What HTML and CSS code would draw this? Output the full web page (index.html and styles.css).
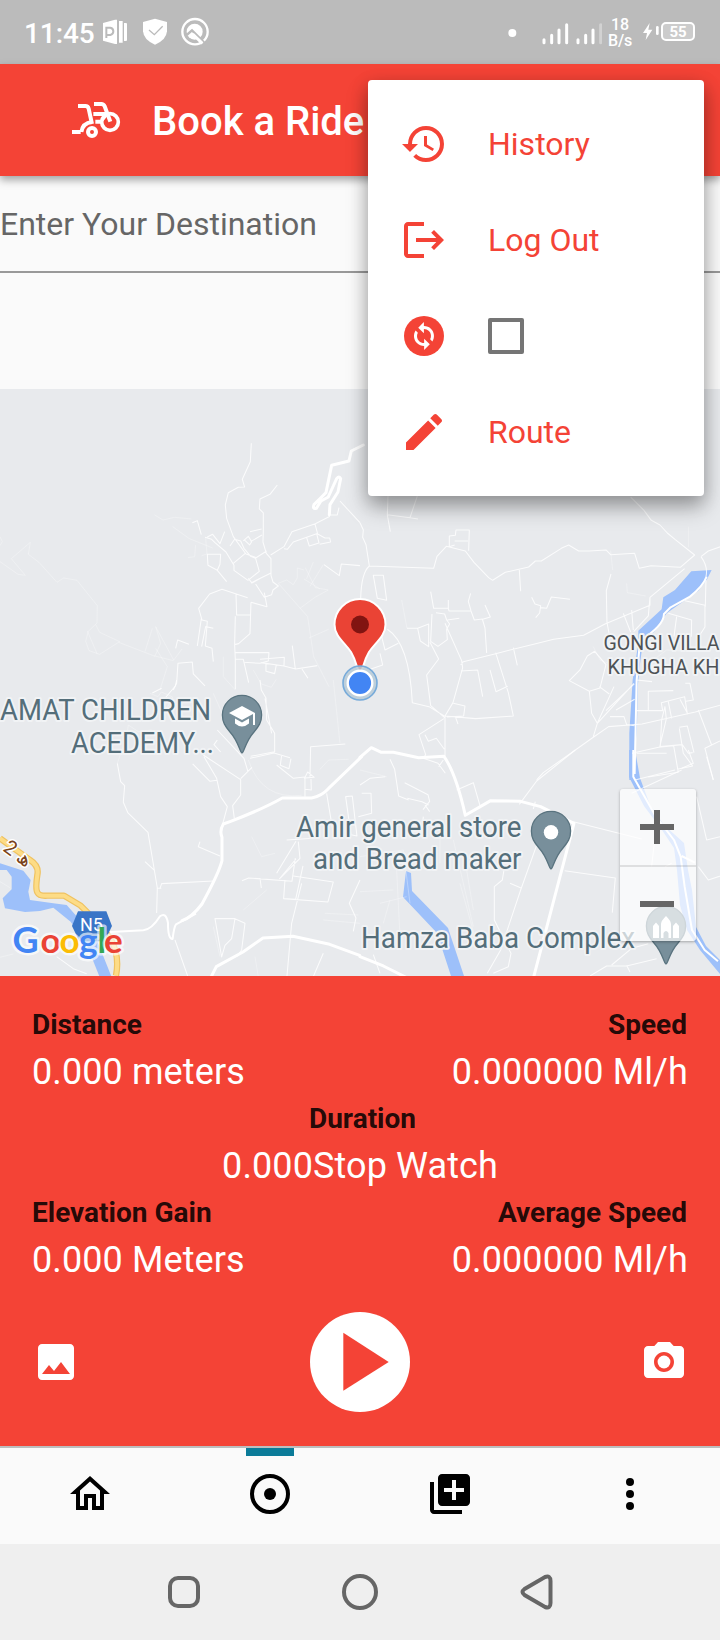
FILE: index.html
```html
<!DOCTYPE html>
<html lang="en">
<head>
<meta charset="utf-8">
<title>Book a Ride</title>
<link rel="stylesheet" href="styles.css">
</head>
<body>
<div class="screen">
  <header class="status">
    <div class="status-left">
      <span class="clock">11:45</span>
      <svg class="status-icons" width="108" height="30" viewBox="306 48 324 90">
        <path fill="#fff" d="M309 69l36-10h6v73h-6l-36-10zM357 63h11v65h-11zM372 69h6q3 0 3 3v48q0 3-3 3h-6z"/>
        <path fill="none" stroke="#bbb" stroke-width="6" d="M319 80v34M319 83h12q9 2 9 11t-9 11h-12"/>
        <path fill="#fff" d="M465 56l36 10v28q-2 26-36 40q-34-14-36-40V66z"/>
        <path fill="none" stroke="#bbb" stroke-width="4" d="M447 90l16 14 25-25"/>
        <circle cx="585" cy="95" r="38" fill="none" stroke="#fff" stroke-width="7"/>
        <circle cx="584" cy="95" r="24" fill="#fff"/>
        <path fill="none" stroke="#bbb" stroke-width="7" d="M560 105l16-14 38 38"/>
        <path fill="none" stroke="#fff" stroke-width="9" d="M578 102l29 28"/>
      </svg>
    </div>
    <div class="status-right">
      <svg width="94" height="30" viewBox="443 48 282 90">
        <circle cx="456" cy="96" r="12" fill="#fff"/>
        <g stroke="#fff" stroke-width="9" stroke-linecap="round"><path d="M551 116v9M574 103v22M596 87v38M619 71v54M653 116v9M676 103v22M698 87v38"/><path stroke="#d2d2d2" d="M721 71v54"/></g>
      </svg>
      <span class="rate"><span>18</span><span>B/s</span></span>
      <svg class="bolt" width="18" height="18" viewBox="846 72 54 54"><path fill="#fff" d="M869 72l-20 30h12l-4 21 20-31h-12z"/><rect x="888" y="81" width="8" height="27" rx="4" fill="#fff"/></svg>
      <span class="battery">55</span>
    </div>
  </header>

  <div class="appbar">
    <svg class="brand" width="52" height="40" viewBox="210 300 156 120" fill="none" stroke="#fff" stroke-width="12">
      <path d="M234 318h22q8 0 10 8l10 46M216 396h26M244 396q4-27 32-30M282 312h22q7 0 10 7l17 46M280 342h50M286 365h18"/>
      <circle cx="276" cy="396" r="12"/><circle cx="330" cy="366" r="25" stroke-width="11"/>
      <path d="M304 365l18-22" stroke-width="7"/>
    </svg>
    <h1 class="title">Book a Ride</h1>
  </div>

  <div class="search"><span class="hint">Enter Your Destination</span></div>

  <main class="map">
    <svg class="map-canvas" width="720" height="587" viewBox="0 389 720 587">
      <g fill="#9dc0fa">
        <path transform="translate(360 480) scale(.3333)" d="M994 274l61-4-15 30-25 32-95 68-35 52-37 40-8 60-7 70-2 118-8 100 15 60h-30V760l10-160 17-110V452l70-64 5-36 35-22z"/>
        <path d="M629 750v27l15 29 18 24 12 18 3 22 3 35 7 25 13 20 20 24v-14l-14-14-10-19-4-37-4-20-4-27-20-18-14-20-10-27-5-28z"/>
        <path d="M406 871l5 2 1 18 36 37 16 48h-13l-14-43-34-36z"/>
        <path transform="translate(0 680) scale(.3333)" d="M0 550l70 22 22 28-7 35 5 25 70 10 40 5 30 34 60 70 20 50 24 60h-36l-36-90-50-74-52-42-40 10-45 3-60-11-7-30 27-27v-38l-15-20H0z"/>
      </g>
      <!-- north-west -->
      <g transform="translate(0 390) scale(.3333)" class="roads">
        <path class="trace" d="M0 440l7 15-7 12M0 515l54 38 22 3-42-50 57-49-6 36 32 24 54 60 20-13 40 7 61 76-1 52-26 25-8 30 10 28 32 11 60-38-60-28-12-23M262 723l30 70M356 757l104 40 60 15 26-35M464 800l18-40-15-50 54 100M435 785l22-70M480 900l22-70-35-55M464 375l25 15 35-8 50 5M518 410l50 36 70 28M587 465l-3 35-20 3M617 445l4 47-16 5M835 580l25-10 20 14 12-20 0-30 20 6M900 655l45-33 40-22-39-7-30-60M912 567l48 30M970 524l-40 65M940 516l-20 50M927 744l59-26M835 580l88 100 18 120 46 90M670 800v60l36 40M760 840l24 42 30 10 15-24"/>
        <path class="minor" d="M754 160l-3 55-24 53 7 23-19 1-30 16-9 37 4 40 20 55 38 52 28 10 12 42-34 27-42-30 0-15-24-40-33-28-10-10-20-6M832 285l-22 28-30 14-2 30 12 12 0 55-1 32 10 34 14 16 0 50 6 20 16 12-16 12-4 14-22 8-26-40M690 468l14-20 18 5 10 22 20 24 14 6 34-22M733 450l16 15 6-10-10-16-15 14M750 425l35-8M752 455l34-20M622 493h40l-2 30-8 18-28-15zM652 541l28 34M577 398l15-6 12 42M622 441l16-8 22 28 14-36M812 495l40-25 24-45 70-24 44-22M852 476l10 2 18-22 70-25 7 28-29 9-8-25M945 402l8 30 22 12 14 0 3 12-33 7M990 375h22l5-22M1020 333l60 65M1080 527l-56-5-6 35-46-33M700 520l36-30M745 565l10 13 58-29M743 623l-77-25-37 14-33 43 10 35 16 4-6 74 20 7 4 40M708 610l2 65 42 0M753 637l48 13-8-42M753 637l-3 94-34 30-12 3 2-85M592 768l12-82M527 775l6-25 34 13M605 770l12-60 23 5M520 900l10-20 4-60 43-4 3 36 35 36M704 765l2 43 24 0 16 70M704 788h103l-2 25-25 7-50-3M780 808l73-6-1 26-70-10M798 820v24l26 7 5-26-30-5M852 828l35 9 65-10M877 767l9 70M906 837l18 28M706 808v90M754 580l26-14"/>
        <path class="main" d="M1090 165l-36 18-7 30-52 13-17 82-16 16-20 20q-5 14 7 11l14-22 22-12 25-55q8-10 12 0l-8 40-24 38-2 30"/>
      </g>
      <!-- north-east -->
      <g transform="translate(360 480) scale(.3333)" class="roads">
        <path class="minor" d="M84 48l-2 57 9 50M172 48l-22 65-68-9M150 113l24 4M0 128l10 22-2 22 10 22 10 64 193 7 10-36 28-30 57 14 26 34 44 46 12 8 38-24 70-16 20-18h18l60-38 22-10 30 18 32 0 50-3 14 14 72-4 14 45 35-8 88 5 43-37-58-46-24-20-22-24-26-14-22-30-40-40M1023 230l22-17 37-13M1023 230q22 30 15 60M28 258q-24 20-26 98M40 286h30l10 75-28-6zM284 195l-16 5v-32l18-2 2-16h40l-2 62M284 183h40M478 270l4 64M212 335l9 50h44l2 8h66l10 27 24-3 8 27 5 75M265 360v24M332 340l-7 24 8 28M375 375l16 36-23 7M216 402l-4 82 22 15 28-20-2-32 9-15-9-12-6-18-26-4M262 420l36-5M255 430l50 112 3 22-29 104-24 40 92 8 113-8-15-70-38-120M206 500v-68l-33 13 8 38zM141 445h34M210 487l26 50-36 48 12 92 42 36M302 555l8-10 97-24 108-27 66-16 90-12 64-34 135-56v-24l104-86M460 503l12 53M303 573l50-3 15 80M390 570l18 65 35-16M515 352l10 20 17 5-3 22-12 14M542 383l18 2 14-34 56 7M753 282l-14 50 2 95 6 32M790 400l22 56M870 352l-5 56-44 47M815 390l5 60M82 448q66 42 75 220l50 12 46 28M0 450q40 10 60 0l15 60 40-20M60 520l8 35-44 15M280 670l35 8-4 30-50 3M286 710l8 22M255 708v120M252 716l-75 48 20 60-6 10M195 764l10 20 24-9 24 33M190 835l44 15 22 30M250 840l-14 20M530 900l20-22 150-106 46-32 100-8 160-36 80-22M628 602l32-32 22-42 22-14 34 40-18 70-32 10zM688 634l7 66 17 30 50-110M700 770l12-40 110-120M738 692l85-80M718 620l30 22M768 690l56-32M750 710h42l8 24 24 3M830 600l46 5M865 690v-56l75-2M825 692h83l-4-24 70-18 8 50M925 665l10 50M960 658l24 45M976 610h14l10 50-22 4M905 720l-4 80 66-6 18 26 13-2M905 720l10-40 4 37-20 85M816 820l80-18 45-5 14 80-90 14M958 742l24-4 20 80M958 745l12 75 28 38-46 10M1015 690l40 105-20 10 25 95M1055 795l25-12M925 400l70 20-1 50M950 410l-8 60M975 362l60 14v65l-14 22M1038 300l-2 80"/>
        <path class="trace" d="M125 360l16 85M758 270l-6-58M986 140v62M800 310l2 28 55 10M700 500l20 40 50 20M880 540l40-30 80 5"/>
        <path class="mid" d="M1040 290q-10 28-50 60l-58 32-20 20q0 35-72 80l-10 120-6 280"/>
      </g>
      <!-- south-west -->
      <g transform="translate(0 680) scale(.3333)" class="roads">
        <path class="trace" d="M450 40l24 10 10-14 34 15-30 60M455 150l-40 5-30-20-5 35-28 80M640 40l40 90 38 24M745 240q40 120 160 106M960 268l26-28 60-2M1000 0l20 190M755 470l30 60 40-10M800 630l-70 60M640 740l20 90M765 830l10 60M0 832l40-10M0 605l30 18M975 700l100 5M970 720l110 10"/>
        <path class="minor" d="M485 25l-28 14M530 0l-4 18-38 45M352 250l10 55 12 12-4 50 14 32 60 58 18 107 10 60-2 75M480 625l5-14 156-8M435 545l30 28M600 485l-5 15 65 28M470 625h14M578 252l52 52 20-3M612 230l38 65 12 55 20 30-16 60M610 225l112 74 0 46-24 32 5 38M722 296l34-34M652 150l80 85 12 40M652 180l-10 14 20 22M780 0l4 30 14 24 2 66 24 40v55l-72 14M750 235l72-16 48 14M845 226l-4 30 26 10 6-30M915 350v-56l28-2-20-16-10 20M830 255l50 40 34-4M933 297l1 33-18-2M930 290l2-90 104-8M980 340l20 120M1037 350l20-2 14 120-18-4zM895 485l5 50-60 60M860 480l80-5M726 602l20-8 130 10 10-70M780 594l4 30M830 580l58-96M838 597l50-60M855 600l-4 56 36 2 22-100M850 656l134 10 16-60-120-18M905 610l-30 120-14 158M1080 600l-32 70 20 44-8 40M645 716h60l-10 60-20 20-10 35zM705 716l30 14-10 80-15 20M970 820l-30 70M525 780l38 108M170 830l50 36 40 15M815 160l-20-105"/>
        <path class="mid" d="M320 757l110-6q25-2 50-42 18-14 24 20 0 50 14 48 4-36 10-44l60-32"/>
        <path class="main" d="M1085 230l-100 96q-20 22-50 28h-88q-60 34-155 70l-22 8q-12 20-4 40v70q-8 35-60 130-30 40-60 50M635 888l14-28 80-44 60-42 90-5 110 24 90 33"/>
        <path stroke="#efc260" stroke-width="19" d="M0 475l90 65q28 18 22 45-6 42 0 52 6 12 30 10h50l50 30 60 60 30 40q28 50 16 110"/>
        <path stroke="#fddc86" stroke-width="12" d="M0 475l90 65q28 18 22 45-6 42 0 52 6 12 30 10h50l50 30 60 60 30 40q28 50 16 110"/>
        <path fill="#3975c7" stroke="none" d="M216 738l18-44h85l17 44-22 46h-76z"/>
      </g>
      <!-- south-east -->
      <g transform="translate(360 750) scale(.3333)" class="roads">
        <path class="trace" d="M0 320l130-20 20 160M60 460l80-20M300 400l50 180M0 60l80 20M320 360l20 120M0 425l100-5M110 360l10 200M240 260v80M70 520l20-70M280 270l60 260"/>
        <path class="minor" d="M90 28l14 30 12 80 30 12M0 105l30-20 46-5M134 98l70 36 5 20-20 25M206 165l-20-10-44-10M195 165l14 20M190 200l-6 60M290 120l50-22 22 76M478 163l52-70 116-93M526 155l-6 22M640 215l205 52M614 362l152 22-9 104M532 280l-50 140-60 180-40 70M450 400l35 15M400 670l45-20 8-40-50-100 0-100 24-20 5-30M755 645l60-50 50-14M690 678l50-30 60 0 90-22M800 646l10 20M60 670l-20-56M1010 140l30 130 40-10M1015 350l30 40 60-20M815 130l150-70M875 350l10-90M985 0l15 40-35 15M1040 20l20 70M825 90l120-30M915 350l20-10M830 10h90M5 130l28 0 2 60-40 10"/>
        <path class="mid" d="M820 0v80l68 120 54 70 20 50 12 90 22 130 38 60 40 34M965 318l40 20"/>
        <path class="main" d="M0 22l34-29 30 14 36 0 76 16 76-4q36 52 64 177l76-44 90 2 60 16 100 50-122 465M0 620l70 28 70 35"/>
      </g>

      <g class="place" font-size="29">
        <text x="0" y="720.2" textLength="211" lengthAdjust="spacingAndGlyphs">AMAT CHILDREN</text>
        <text x="71" y="753" textLength="143" lengthAdjust="spacingAndGlyphs">ACEDEMY...</text>
        <text x="296" y="836.7" textLength="225.500" lengthAdjust="spacingAndGlyphs">Amir general store</text>
        <text x="313" y="869.4" textLength="208.500" lengthAdjust="spacingAndGlyphs">and Bread maker</text>
        <text x="361" y="948.3" textLength="274" lengthAdjust="spacingAndGlyphs">Hamza Baba Complex</text>
      </g>
      <g class="place area" font-size="21">
        <text x="603.5" y="650" textLength="116" lengthAdjust="spacingAndGlyphs">GONGI VILLA</text>
        <text x="607.5" y="674" textLength="112" lengthAdjust="spacingAndGlyphs">KHUGHA KH</text>
      </g>
      <text class="shield" x="80" y="930.5">N5</text>
      <text class="road-name" transform="translate(2 850) rotate(36)">2 ھ</text>

      <g fill="#788f9b" stroke="#59737f" stroke-width="1.3">
        <path d="M242 753c-2 0-3-11-12-21-5-6-7.600-10-7.600-17a19.600 19.600 0 0 1 39.200 0c0 7-2.600 11-7.600 17-9 10-10 21-12 21z"/>
        <path d="M551 869c-2 0-3-11-12-21-5-6-7.600-10-7.600-17a19.600 19.600 0 0 1 39.200 0c0 7-2.600 11-7.600 17-9 10-10 21-12 21z"/>
        <path d="M666 964c-2 0-3-11-12-21-5-6-7.600-10-7.600-17a19.600 19.600 0 0 1 39.200 0c0 7-2.600 11-7.600 17-9 10-10 21-12 21z"/>
      </g>
      <g fill="#fff">
        <path d="M242 706l13 7v12h-2v-11l-11 6-13-7zM235 718.500l7 4 7-4v5q-7 6-14 0z"/>
        <circle cx="551" cy="832.300" r="7.200"/>
        <path d="M653 938v-12l3-3.500 3 3.500v12zM661 938v-14q0-3 5-8 5 5 5 8v14h-2.500v-5q-2.500-4-5 0v5zM673 938v-12l3-3.500 3 3.500v12z"/>
      </g>

      <text class="logo" y="953"><tspan x="12.500" font-size="36" fill="#4285f4">G</tspan><tspan x="40.500" fill="#ea4335">o</tspan><tspan x="59.500" fill="#fbbc05">o</tspan><tspan x="79" fill="#4285f4">g</tspan><tspan x="97.500" fill="#34a853">l</tspan><tspan x="104" fill="#ea4335">e</tspan></text>

      <path fill="#ea4335" stroke="#fff" stroke-width="2" d="M360 672c-3 0-2.500-9-9-20-7-10-16.500-16-16.500-27.500a25.500 25.500 0 0 1 51 0c0 11.500-9.500 17.500-16.500 27.500-6.500 11-6 20-9 20z"/>
      <circle cx="360" cy="624.500" r="9" fill="#811411"/>
      <circle cx="360" cy="683" r="17" fill="#b6cad7" fill-opacity=".85" stroke="#77abda" stroke-width="1.600"/>
      <circle cx="360" cy="683" r="12.300" fill="#4285f4" stroke="#fff" stroke-width="2.400"/>
    </svg>
    <div class="zoom">
      <div class="zoom-btn"><span class="bar"></span><span class="bar upright"></span></div>
      <div class="zoom-btn"><span class="bar"></span></div>
    </div>
  </main>

  <section class="panel">
    <div class="stats">
      <div class="stat"><b>Distance</b><span>0.000 meters</span></div>
      <div class="stat right"><b>Speed</b><span>0.000000 Ml/h</span></div>
      <div class="stat center"><b>Duration</b><span>0.000Stop Watch</span></div>
      <div class="stat"><b>Elevation Gain</b><span>0.000 Meters</span></div>
      <div class="stat right"><b>Average Speed</b><span>0.000000 Ml/h</span></div>
    </div>
    <div class="actions">
      <svg class="icon" viewBox="0 0 24 24"><path d="M21 19V5c0-1.100-.9-2-2-2H5c-1.100 0-2 .9-2 2v14c0 1.100.9 2 2 2h14c1.100 0 2-.9 2-2zM8.500 13.500l2.500 3.010L14.500 12l4.500 6H5l3.500-4.500z"/></svg>
      <svg width="100" height="100" viewBox="0 0 100 100"><circle cx="50" cy="50" r="50" fill="#fff"/><path fill="#f44336" d="M33.300 20.700v58L78.700 50z"/></svg>
      <svg class="icon" viewBox="0 0 24 24"><circle cx="12" cy="12" r="3.200"/><path d="M9 2L7.170 4H4c-1.100 0-2 .9-2 2v12c0 1.100.9 2 2 2h16c1.100 0 2-.9 2-2V6c0-1.100-.9-2-2-2h-3.170L15 2H9zm3 15c-2.760 0-5-2.240-5-5s2.240-5 5-5 5 2.240 5 5-2.240 5-5 5z"/></svg>
    </div>
  </section>

  <nav class="tabs">
    <div class="tab"><svg class="icon" viewBox="0 0 24 24"><path d="M12 5.690l5 4.500V18h-2v-6H9v6H7v-7.810l5-4.500M12 3L2 12h3v8h6v-6h2v6h6v-8h3L12 3z"/></svg></div>
    <div class="tab active"><svg class="icon" viewBox="0 0 24 24"><circle cx="12" cy="12" r="9" fill="none" stroke="#000" stroke-width="2"/><circle cx="12" cy="12" r="3"/></svg></div>
    <div class="tab"><svg class="icon" viewBox="0 0 24 24"><path d="M4 6H2v14c0 1.100.9 2 2 2h14v-2H4V6zm16-4H8c-1.100 0-2 .9-2 2v12c0 1.100.9 2 2 2h12c1.100 0 2-.9 2-2V4c0-1.100-.9-2-2-2zm-1 9h-4v4h-2v-4H9V9h4V5h2v4h4v2z"/></svg></div>
    <div class="tab"><svg class="icon" viewBox="0 0 24 24"><circle cx="12" cy="6" r="2"/><circle cx="12" cy="12" r="2"/><circle cx="12" cy="18" r="2"/></svg></div>
  </nav>

  <footer class="sysnav">
    <svg width="36" height="36" viewBox="0 0 36 36"><rect x="4" y="4" width="28" height="28" rx="8"/></svg>
    <svg width="36" height="36" viewBox="0 0 36 36"><circle cx="18" cy="18" r="16"/></svg>
    <svg width="36" height="36" viewBox="0 0 36 36"><path d="M6.500 15L27 3q5.500-2 5.500 4v22q0 6-5.500 4L6.500 21q-4-3 0-6z"/></svg>
  </footer>

  <div class="menu">
    <div class="menu-item"><svg class="icon" viewBox="0 0 24 24"><path d="M13 3a9 9 0 0 0-9 9H1l3.890 3.890.07.14L9 12H6c0-3.870 3.130-7 7-7s7 3.130 7 7-3.130 7-7 7c-1.930 0-3.680-.79-4.940-2.060l-1.420 1.420A8.954 8.954 0 0 0 13 21a9 9 0 0 0 0-18zm-1 5v5l4.280 2.540.72-1.210-3.500-2.080V8H12z"/></svg><span>History</span></div>
    <div class="menu-item"><svg class="icon" viewBox="0 0 24 24"><path d="M17 7l-1.410 1.410L18.170 11H8v2h10.170l-2.580 2.580L17 17l5-5zM4 5h8V3H4c-1.100 0-2 .9-2 2v14c0 1.100.9 2 2 2h8v-2H4V5z"/></svg><span>Log Out</span></div>
    <div class="menu-item"><svg class="icon" viewBox="0 0 24 24"><circle cx="12" cy="12" r="10"/><path fill="#fff" d="M12.060 19v-2.010c-.02 0-.04.01-.06.01-1.280 0-2.560-.49-3.540-1.460-1.710-1.710-1.920-4.350-.64-6.290l1.100 1.100c-.71 1.330-.53 3.010.59 4.130.7.7 1.630 1.040 2.560 1.010v-2.140l2.830 2.830L12.060 19zm4.110-4.240l-1.100-1.100c.71-1.330.53-3.010-.59-4.130C13.790 8.840 12.900 8.500 12 8.500h-.06v2.150L9.110 7.830 11.940 5v2.020c1.300-.02 2.610.45 3.600 1.450 1.700 1.700 1.910 4.350.63 6.290z"/></svg><i class="checkbox"></i></div>
    <div class="menu-item"><svg class="icon" viewBox="0 0 24 24"><path d="M3 17.250V21h3.750L17.810 9.940l-3.750-3.750L3 17.250zM20.710 7.040c.39-.39.39-1.020 0-1.410l-2.340-2.340c-.39-.39-1.020-.39-1.410 0l-1.830 1.830 3.750 3.750 1.830-1.830z"/></svg><span>Route</span></div>
  </div>
</div>
</body>
</html>
```

FILE: styles.css
```css
* { box-sizing: border-box; }
body { margin: 0; background: #fafafa; font-family: Roboto, "Liberation Sans", sans-serif; }
svg { display: block; flex: none; }
.screen { position: relative; width: 720px; height: 1640px; overflow: hidden; display: flex; flex-direction: column; }
.screen > * { flex: none; }
.icon { width: 48px; height: 48px; fill: currentColor; }

.status { height: 64px; background: #bbb; color: #fff; display: flex; justify-content: space-between; padding: 0 25px 0 24px; }
.status-left { display: flex; align-items: center; }
.clock { width: 78px; font-size: 28px; font-weight: 500; line-height: 32px; padding-top: 3px; letter-spacing: -.1px; }
.status-icons { margin-top: -2px; }
.status-right { display: flex; align-items: center; }
.rate { width: 28px; margin: 2px 8px 0 4px; display: flex; flex-direction: column; align-items: center; font-size: 16px; line-height: 16px; font-weight: 500; letter-spacing: -.2px; }
.battery { width: 34px; height: 19px; margin: -1px 0 0 1px; border: 2px solid #fff; border-radius: 5px; background: #ccc; font-size: 15px; line-height: 16px; font-weight: 700; text-align: center; }

.appbar { position: relative; height: 112px; background: #f44336; color: #fff; display: flex; align-items: center; padding-left: 70px; box-shadow: 0 4px 8px rgba(0,0,0,.35); }
.title { margin: 4px 0 0 30px; font-size: 40px; font-weight: 500; line-height: 48px; white-space: nowrap; }

.search { height: 97px; border-bottom: 2px solid #999; margin-bottom: 116px; padding-top: 29px; }
.hint { display: block; font-size: 32px; line-height: 38px; color: #666; }

.map { position: relative; height: 587px; background: #e8eaed; overflow: hidden; }
.roads { fill: none; stroke: #fff; stroke-linejoin: round; }
.minor { stroke-width: 3.2; stroke-opacity: .82; }
.trace { stroke-width: 2.5; stroke-opacity: .35; }
.mid { stroke-width: 6; }
.main { stroke-width: 9; stroke-linecap: round; }
.place { fill: #546e7a; stroke: #f1f3f5; stroke-width: 4px; stroke-linejoin: round; paint-order: stroke; }
.area { fill: #4d5256; }
.shield { fill: #fff; font-size: 18px; }
.road-name { fill: #7a4319; font-size: 20px; stroke: #fff; stroke-width: 3px; paint-order: stroke; font-family: Roboto, "DejaVu Sans", sans-serif; }
.logo { font-family: Lato, sans-serif; font-size: 35px; font-weight: 700; stroke: rgba(255,255,255,.65); stroke-width: 5px; stroke-linejoin: round; paint-order: stroke; }

.zoom { position: absolute; left: 620px; top: 400px; width: 76px; height: 152px; background: rgba(255,255,255,.7); border-radius: 3px; box-shadow: 0 1px 3px rgba(0,0,0,.3); }
.zoom-btn { height: 76px; display: grid; place-items: center; }
.zoom-btn + .zoom-btn { border-top: 2px solid rgba(0,0,0,.1); }
.bar { grid-area: 1 / 1; width: 34px; height: 6px; margin-right: 2px; background: #666; }
.upright { transform: rotate(90deg); }

.panel { height: 470px; background: #f44336; padding: 27px 32px 0; display: flex; flex-direction: column; }
.stats { height: 282px; display: grid; grid-template-columns: 1fr 1fr; grid-auto-rows: 94px; }
.stat { display: flex; flex-direction: column; }
.stat b { font-size: 28px; line-height: 44px; font-weight: 700; color: rgba(0,0,0,.87); }
.stat span { font-size: 36px; line-height: 50px; color: #fff; letter-spacing: .1px; }
.right { align-items: flex-end; }
.right b { margin-right: 1px; }
.center { grid-column: 1 / 3; align-items: center; }
.center b { margin-left: 5px; }
.actions { display: flex; justify-content: space-between; align-items: center; height: 100px; margin-top: 27px; color: #fff; }

.tabs { height: 98px; border-top: 2px solid #bdbdbd; display: grid; grid-template-columns: repeat(4, 1fr); color: #000; }
.tab { display: flex; flex-direction: column; align-items: center; padding-top: 22px; }
.active { padding-top: 0; }
.active::before { content: ""; width: 48px; height: 8px; margin-bottom: 14px; background: #0b7b98; }

.sysnav { height: 96px; background: #efefef; display: flex; align-items: center; justify-content: center; gap: 140px; }
.sysnav svg { fill: none; stroke: #666; stroke-width: 4; }

.menu { position: absolute; left: 368px; top: 80px; width: 336px; height: 416px; padding: 16px 0; background: #fff; border-radius: 4px; color: #f44336; box-shadow: 0 12px 22px rgba(0,0,0,.26), 0 5px 18px rgba(0,0,0,.2); }
.menu-item { height: 96px; display: flex; align-items: center; gap: 40px; padding-left: 32px; font-size: 32px; }
.checkbox { width: 36px; height: 36px; border: 4px solid #757575; border-radius: 2px; }
```
